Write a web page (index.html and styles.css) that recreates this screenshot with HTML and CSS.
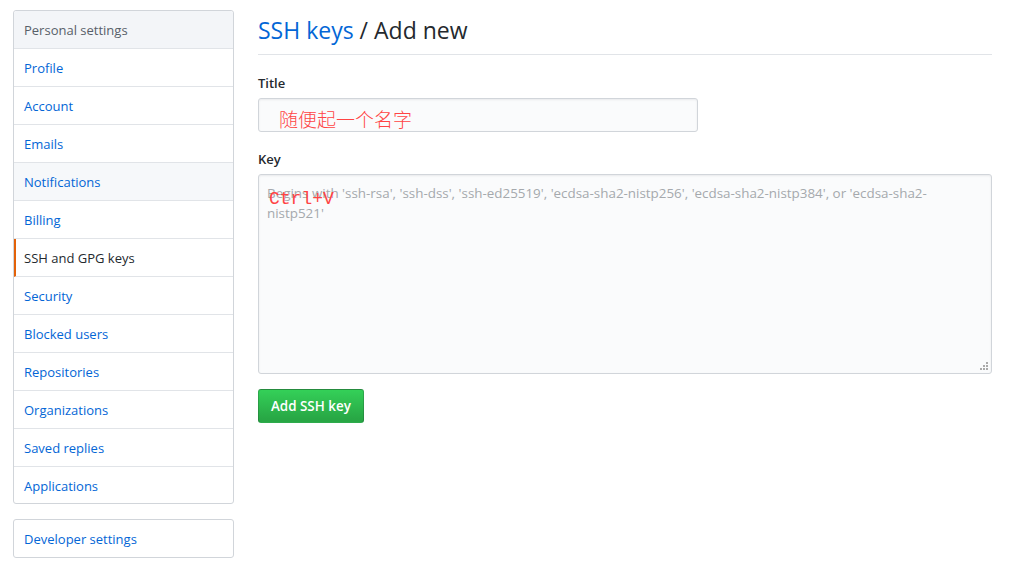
FILE: index.html
```html
<!DOCTYPE html>
<html lang="en">
<head>
<meta charset="utf-8">
<link rel="stylesheet" href="styles.css">
</head>
<body>
<div class="page">
  <aside class="sidebar">
    <nav class="menu">
      <div class="menu-heading">Personal settings</div>
      <a class="menu-item">Profile</a>
      <a class="menu-item">Account</a>
      <a class="menu-item">Emails</a>
      <a class="menu-item hover">Notifications</a>
      <a class="menu-item">Billing</a>
      <a class="menu-item selected">SSH and GPG keys</a>
      <a class="menu-item">Security</a>
      <a class="menu-item">Blocked users</a>
      <a class="menu-item">Repositories</a>
      <a class="menu-item">Organizations</a>
      <a class="menu-item">Saved replies</a>
      <a class="menu-item">Applications</a>
    </nav>
    <nav class="menu">
      <a class="menu-item single">Developer settings</a>
    </nav>
  </aside>
  <main class="content">
    <h2 class="subhead"><a class="crumb">SSH keys</a> / Add new</h2>
    <form class="form">
      <div class="field">
        <label class="label">Title</label>
        <div class="input-wrap">
          <div class="input"></div>
          <span class="note note-title">随便起一个名字</span>
        </div>
      </div>
      <div class="field">
        <label class="label">Key</label>
        <div class="input-wrap">
          <div class="textarea"><span class="placeholder">Begins with 'ssh-rsa', 'ssh-dss', 'ssh-ed25519', 'ecdsa-sha2-nistp256', 'ecdsa-sha2-nistp384', or 'ecdsa-sha2-nistp521'</span>
            <svg class="grip" width="9" height="9" viewBox="0 0 9 9"><rect x="6" y="0" width="2" height="2" fill="#aaa"/><rect x="3" y="3" width="2" height="2" fill="#aaa"/><rect x="6" y="3" width="2" height="2" fill="#aaa"/><rect x="0" y="6" width="2" height="2" fill="#aaa"/><rect x="3" y="6" width="2" height="2" fill="#aaa"/><rect x="6" y="6" width="2" height="2" fill="#aaa"/></svg>
          </div>
          <span class="note note-key">Ctrl+V</span>
        </div>
      </div>
      <div class="actions"><span class="btn">Add SSH key</span></div>
    </form>
  </main>
</div>
</body>
</html>
```
FILE: styles.css
```css
* { box-sizing: border-box; }
body {
  margin: 0;
  background: #fff;
  font-family: "Open Sans", "Noto Sans", "Liberation Sans", sans-serif;
  font-size: 13px;
  color: #24292e;
}
.page {
  display: flex;
  padding: 10px 0 0 13px;
  gap: 24px;
}
.sidebar {
  width: 221px;
  display: flex;
  flex-direction: column;
  gap: 15px;
  flex-shrink: 0;
}
.menu {
  border: 1px solid #d1d5da;
  border-radius: 3px;
  background: #fff;
  display: flex;
  flex-direction: column;
}
.menu-heading {
  height: 38px;
  line-height: 39px;
  padding-left: 10px;
  background: #f3f5f8;
  color: #586069;
  border-bottom: 1px solid #e1e4e8;
  border-radius: 3px 3px 0 0;
}
.menu-item {
  height: 38px;
  line-height: 39px;
  padding-left: 10px;
  color: #0366d6;
  border-bottom: 1px solid #e1e4e8;
  position: relative;
}
.menu-item:last-child { border-bottom: 0; height: 36px; line-height: 38px; }
.menu-item.single { height: 37px; line-height: 39px; }
.menu-item.hover { background: #f6f8fa; }
.menu-item.selected {
  color: #24292e;
  border-left: 2px solid #e36209;
  padding-left: 8px;
}
.content {
  width: 734px;
}
.subhead {
  margin: 0;
  font-weight: 400;
  font-size: 23px;
  line-height: 40px;
  padding-bottom: 4px;
  border-bottom: 1px solid #e1e4e8;
  color: #24292e;
}
.crumb { color: #0366d6; }
.form { padding-top: 14px; }
.field { margin-bottom: 13px; }
.label {
  display: block;
  font-weight: 600;
  font-size: 13px;
  line-height: 28px;
  margin-bottom: 1px;
}
.input-wrap { position: relative; }
.input {
  width: 440px;
  height: 34px;
  background: #fafbfc;
  border: 1px solid #d1d5da;
  border-radius: 3px;
  box-shadow: inset 0 1px 2px rgba(27,31,35,0.075);
}
.textarea {
  width: 734px;
  height: 200px;
  background: #fafbfc;
  border: 1px solid #d1d5da;
  border-radius: 3px;
  box-shadow: inset 0 1px 2px rgba(27,31,35,0.075);
  padding: 8px 56px 0 8px;
  position: relative;
  line-height: 20px;
  font-size: 13.4px;
}
.placeholder { color: #a5a9ad; }
.grip { position: absolute; right: 2px; bottom: 2px; }
.note {
  position: absolute;
  color: #f44;
}
.note-title {
  left: 21px;
  top: 8px;
  font-family: "Noto Sans CJK SC", sans-serif;
  font-weight: 300;
  font-size: 19px;
  line-height: 26px;
}
.note-key {
  left: 11px;
  top: 14px;
  font-family: "Liberation Mono", monospace;
  font-size: 18px;
  line-height: 22px;
}
.actions { padding-top: 2px; }
.btn {
  display: inline-block;
  height: 34px;
  line-height: 32px;
  padding: 0 12px;
  color: #fff;
  font-weight: 600;
  font-size: 13.4px;
  border: 1px solid rgba(27,31,35,0.2);
  border-radius: 3px;
  background: linear-gradient(#34d058, #28a745 90%);
}
```
